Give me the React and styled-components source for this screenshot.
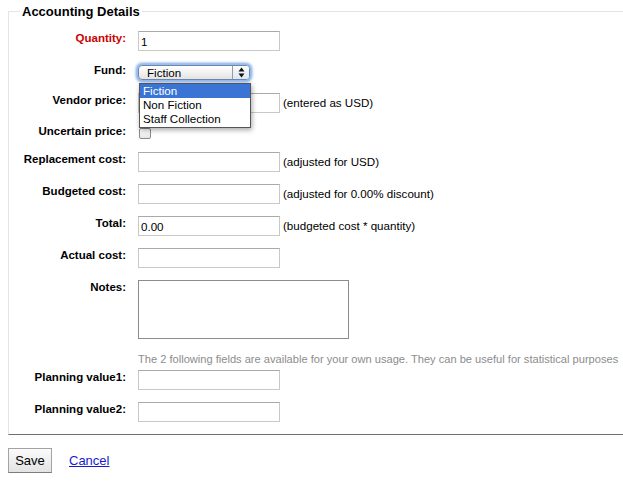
import React from 'react';
import styled, { createGlobalStyle } from 'styled-components';

const GlobalStyle = createGlobalStyle`
  html, body { margin: 0; padding: 0; background: #fff; }
  body { font-family: "Liberation Sans", Arial, sans-serif; overflow: hidden; color: #000; }
`;

const Page = styled.div`
  width: 623px;
  box-sizing: border-box;
  padding: 4px 0 0 8px;
`;

const Fieldset = styled.fieldset`
  margin: 0;
  padding: 12px 0 12px 0;
  min-width: 0;
  border: none;
  border-top: 1px solid #e4e4e4;
  border-left: 1px solid #e4e4e4;
  border-bottom: 1px solid #6f6f6f;
`;

const Legend = styled.legend`
  margin-left: 11px;
  padding: 0 2px;
  font-size: 13px;
  font-weight: bold;
  line-height: 15px;
  color: #000;
`;

const List = styled.ol`
  list-style: none;
  margin: 0;
  padding: 0;
`;

const Row = styled.li`
  display: flex;
  align-items: flex-start;
  margin-bottom: ${(p) => (p.$mb ?? 12)}px;
`;

const Label = styled.label`
  flex: none;
  width: 117px;
  margin-right: 12px;
  text-align: right;
  font-size: 11.5px;
  font-weight: bold;
  line-height: 15px;
  color: ${(p) => (p.$required ? '#cc0000' : '#000')};
`;

const TextInput = styled.input`
  flex: none;
  width: 142px;
  height: 20px;
  box-sizing: border-box;
  margin: 0;
  padding: 0 2px;
  border: 1px solid #c9c9c9;
  border-top-color: #a9a9a9;
  font-family: "Liberation Sans", Arial, sans-serif;
  font-size: 11.6px;
  color: #000;
  background: #fff;
  outline: none;
`;

const TextArea = styled.textarea`
  display: block;
  flex: none;
  width: 211px;
  height: 59px;
  box-sizing: border-box;
  margin: 0;
  padding: 2px;
  border: 1px solid #8c8c8c;
  resize: none;
  font-family: "Liberation Sans", Arial, sans-serif;
  font-size: 11.6px;
  outline: none;
`;

const Hint = styled.span`
  margin-left: 3px;
  font-size: 11.6px;
  line-height: 20px;
  color: #000;
  white-space: nowrap;
`;

const Note = styled.li`
  margin: 0 0 4px 129px;
  font-size: 11.1px;
  line-height: 14px;
  color: #8c8c8c;
  white-space: nowrap;
`;

const Checkbox = styled.input`
  appearance: none;
  -webkit-appearance: none;
  flex: none;
  width: 12px;
  height: 11px;
  margin: 4px 0 0 1px;
  box-sizing: border-box;
  border: 1px solid #8a8a8a;
  border-radius: 2px;
  background: linear-gradient(#ffffff, #e6e6e6);
`;

const SelectWrap = styled.div`
  position: relative;
  flex: none;
  width: 112px;
  height: 15px;
  margin-top: 2px;
`;

const SelectBox = styled.div`
  display: flex;
  height: 15px;
  box-sizing: border-box;
  border: 1px solid #6f86ab;
  border-radius: 4px;
  overflow: hidden;
  background: linear-gradient(#ffffff, #f2f2f2 50%, #e3e3e3);
  box-shadow: 0 0 0 1px #98bdf0, 0 0 3px 2px #6fa2e8;
  font-size: 11.6px;
  line-height: 13px;
`;

const SelectValue = styled.span`
  flex: 1;
  padding-left: 8px;
  white-space: nowrap;
`;

const SelectArrows = styled.span`
  flex: none;
  width: 16px;
  display: flex;
  align-items: center;
  justify-content: center;
  border-left: 1px solid #9a9a9a;
  background: linear-gradient(#fdfdfd, #dbe6f4);
`;

const Menu = styled.ul`
  position: absolute;
  top: 18px;
  left: 1px;
  z-index: 5;
  width: 112px;
  box-sizing: border-box;
  margin: 0;
  padding: 0 0 1px;
  list-style: none;
  background: #fff;
  border: 1px solid #555;
  box-shadow: 1px 2px 5px rgba(0, 0, 0, 0.35);
`;

const MenuItem = styled.li`
  padding-left: 3px;
  font-size: 11.6px;
  line-height: 14px;
  white-space: nowrap;
  background: ${(p) => (p.$active ? '#3a75d6' : 'transparent')};
  color: ${(p) => (p.$active ? '#fff' : '#000')};
`;

const Actions = styled.div`
  display: flex;
  align-items: center;
  gap: 17px;
  margin-top: 13px;
`;

const Button = styled.button`
  width: 44px;
  height: 25px;
  margin: 0;
  padding: 0;
  box-sizing: border-box;
  border: 1px solid #a3a3a3;
  border-bottom-color: #7c7c7c;
  background: linear-gradient(#fbfbfb, #e3e3e3);
  font-family: "Liberation Sans", Arial, sans-serif;
  font-size: 13px;
  color: #000;
`;

const CancelLink = styled.a`
  font-size: 13px;
  color: #1a1acc;
  text-decoration: underline;
`;

const Field = ({ label, required, hint, value = '', mb }) => (
  <Row $mb={mb}>
    <Label $required={required}>{label}</Label>
    <TextInput defaultValue={value} />
    {hint && <Hint>{hint}</Hint>}
  </Row>
);

export default function App() {
  return (
    <Page>
      <GlobalStyle />
      <Fieldset>
        <Legend>Accounting Details</Legend>
        <List>
          <Field label="Quantity:" required value="1" />
          <Row $mb={13}>
            <Label>Fund:</Label>
            <SelectWrap>
              <SelectBox>
                <SelectValue>Fiction</SelectValue>
                <SelectArrows>
                  <svg width="7" height="11" viewBox="0 0 7 11">
                    <path d="M3.5 0.5 L6.5 4.5 H0.5 Z M0.5 6.5 H6.5 L3.5 10.5 Z" fill="#111" />
                  </svg>
                </SelectArrows>
              </SelectBox>
              <Menu>
                <MenuItem $active>Fiction</MenuItem>
                <MenuItem>Non Fiction</MenuItem>
                <MenuItem>Staff Collection</MenuItem>
              </Menu>
            </SelectWrap>
          </Row>
          <Field label="Vendor price:" hint="(entered as USD)" mb={11} />
          <Row $mb={13}>
            <Label>Uncertain price:</Label>
            <Checkbox type="checkbox" />
          </Row>
          <Field label="Replacement cost:" hint="(adjusted for USD)" />
          <Field label="Budgeted cost:" hint="(adjusted for 0.00% discount)" />
          <Field label="Total:" value="0.00" hint="(budgeted cost * quantity)" />
          <Field label="Actual cost:" />
          <Row $mb={13}>
            <Label>Notes:</Label>
            <TextArea />
          </Row>
          <Note>The 2 following fields are available for your own usage. They can be useful for statistical purposes</Note>
          <Field label="Planning value1:" />
          <Field label="Planning value2:" mb={0} />
        </List>
      </Fieldset>
      <Actions>
        <Button>Save</Button>
        <CancelLink href="#">Cancel</CancelLink>
      </Actions>
    </Page>
  );
}
